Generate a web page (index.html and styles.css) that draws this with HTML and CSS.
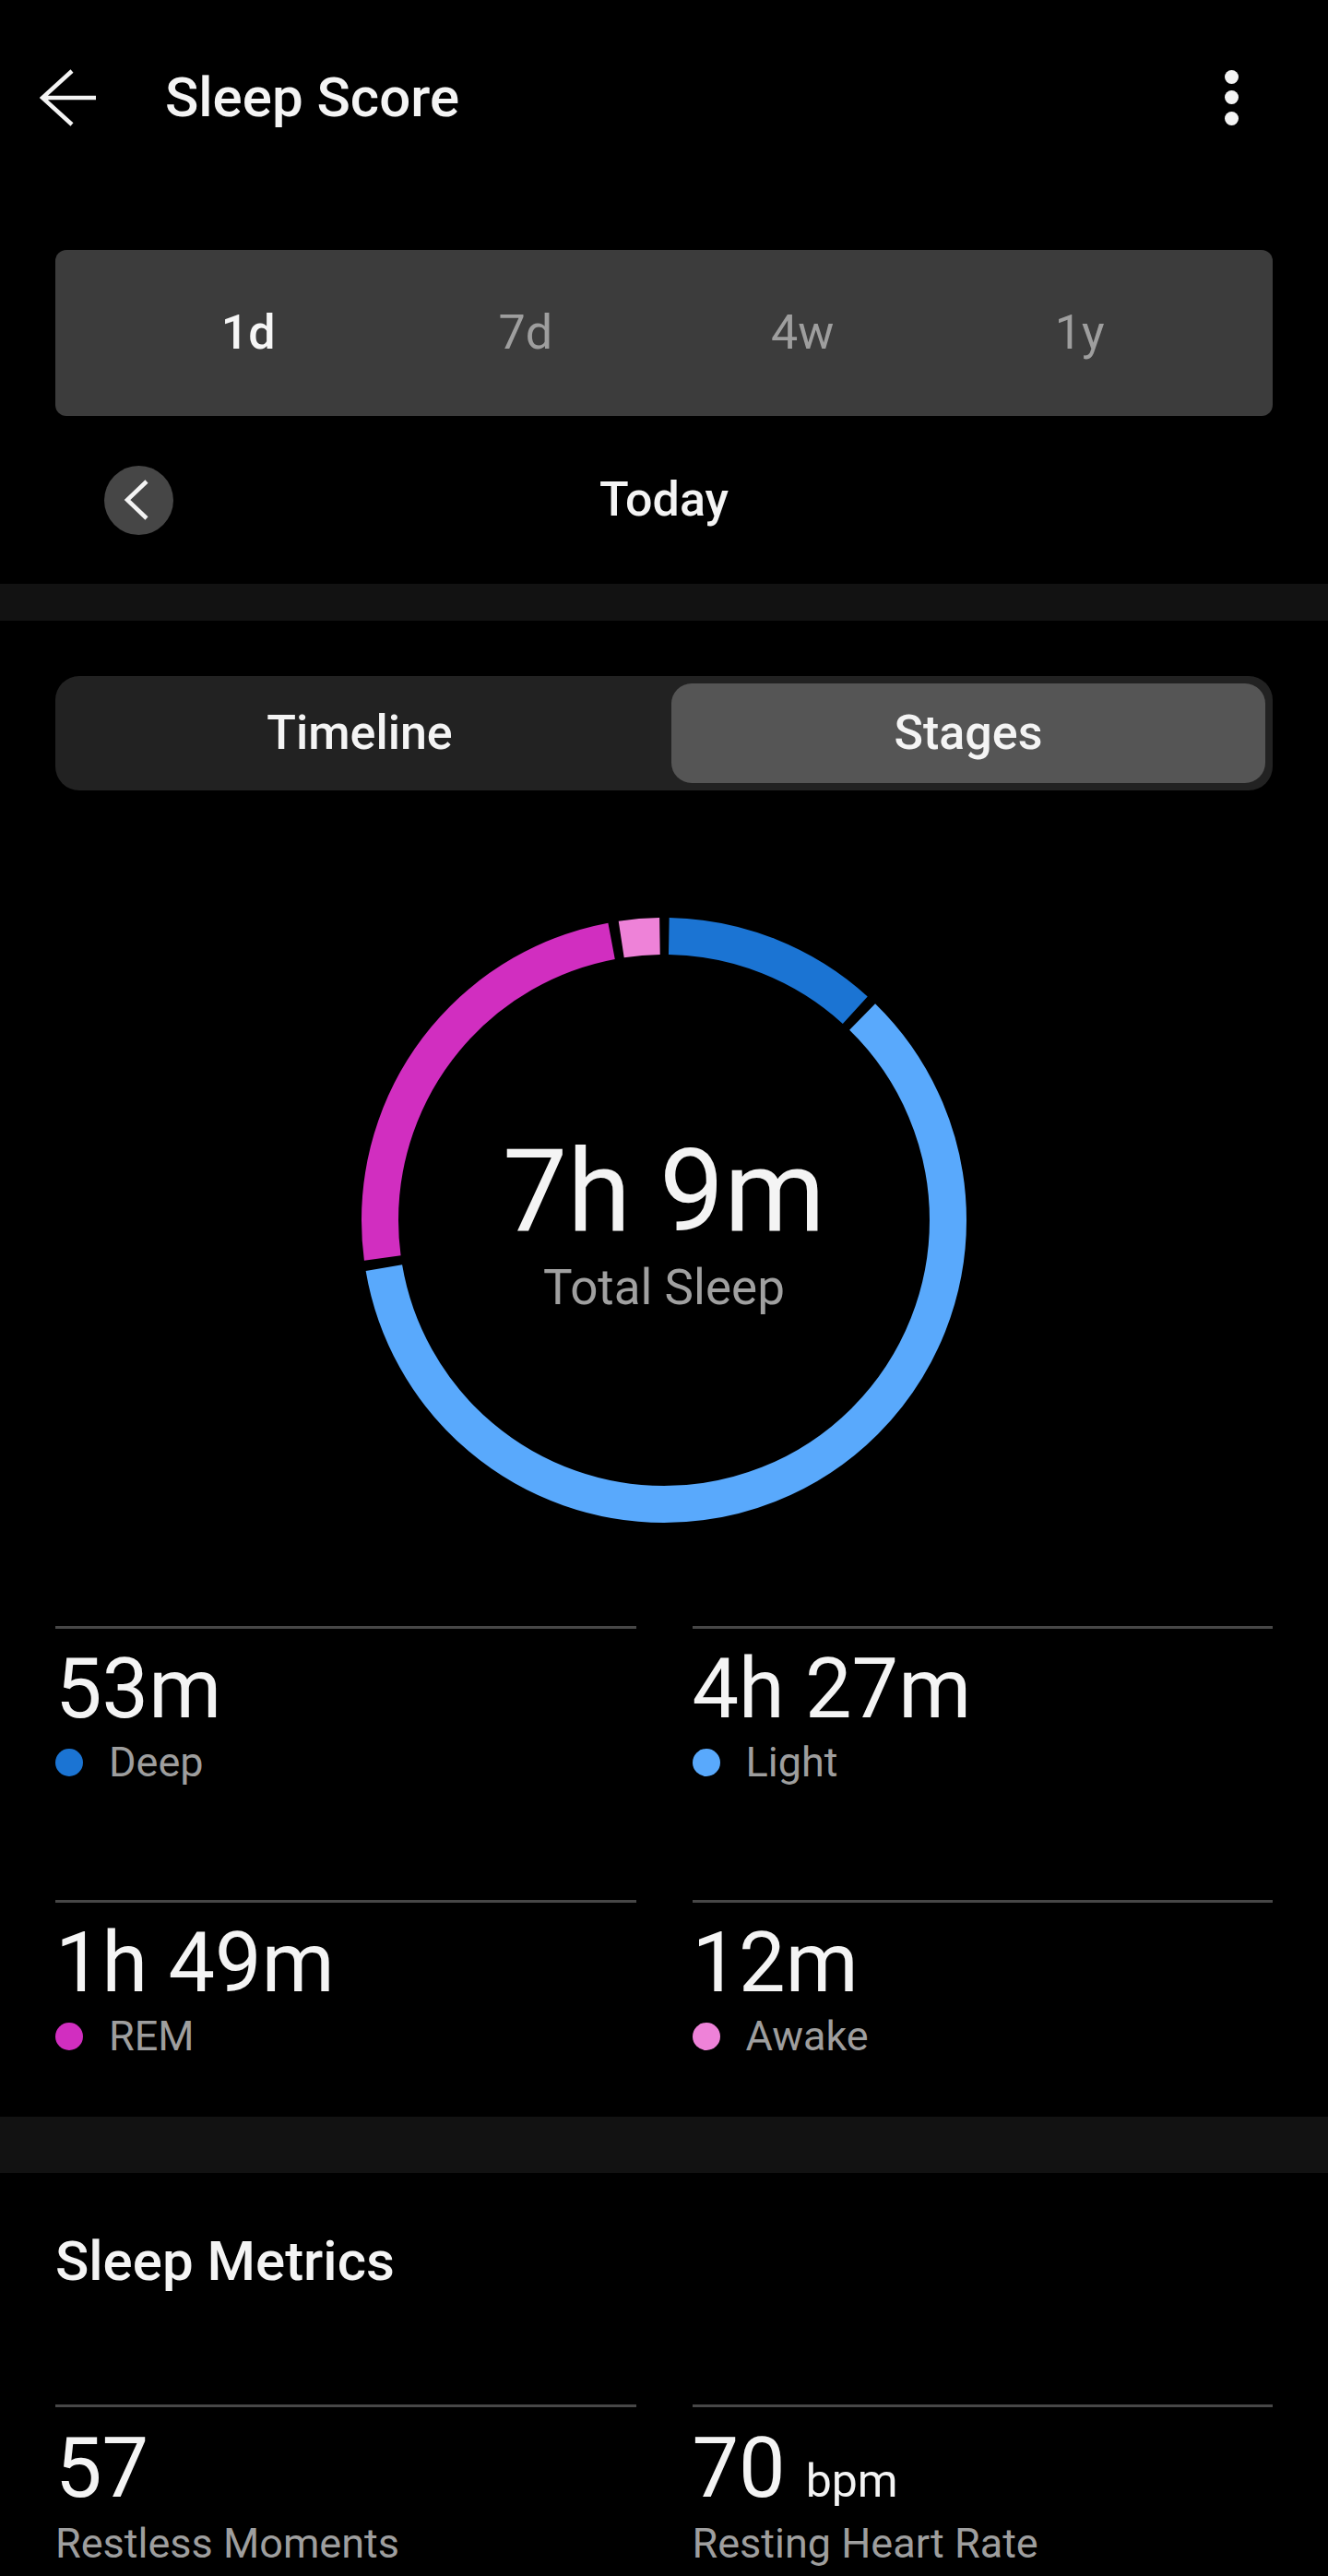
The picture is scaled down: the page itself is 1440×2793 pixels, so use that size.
FILE: index.html
```html
<!doctype html>
<html lang="en">

<head>
    <meta charset="utf-8">
    <meta name="viewport" content="width=device-width, initial-scale=1">
    <title>Sleep Score</title>
    <link rel="stylesheet" href="styles.css">
</head>

<body>
<!-- fejléc -->
<header class="topbar">
    <button class="back-btn" aria-label="Back">
        <svg width="64" height="62" viewBox="0 0 64 62">
            <path d="M61 31H4M35 2L3 31L35 60" fill="none" stroke="#f4f4f4" stroke-width="4.5"/>
        </svg>
    </button>
    <h1 class="title">Sleep Score</h1>
    <button class="more-btn" aria-label="More">
        <span class="dot"></span>
        <span class="dot"></span>
        <span class="dot"></span>
    </button>
</header>

<section class="range">
    <div class="range-tabs">
        <span class="range-tab active">1d</span>
        <span class="range-tab">7d</span>
        <span class="range-tab">4w</span>
        <span class="range-tab">1y</span>
    </div>
    <div class="date-row">
        <button class="prev-btn" aria-label="Previous day">
            <svg width="30" height="46" viewBox="0 0 30 46">
                <path d="M25 3L4 23L25 43" fill="none" stroke="#f4f4f4" stroke-width="4.5"/>
            </svg>
        </button>
        <span class="date-label">Today</span>
        <span></span>
    </div>
</section>

<div class="band"></div>

<section class="stages">
    <div class="view-toggle">
        <span class="view-tab">Timeline</span>
        <span class="view-tab active">Stages</span>
    </div>

    <!-- kördiagram: 441 perc összesen, 2 fokos rések -->
    <div class="donut">
        <svg class="donut-chart" width="660" height="660" viewBox="0 0 660 660">
            <g transform="rotate(-90 330 330)" fill="none" stroke-width="40">
                <circle cx="330" cy="330" r="308" stroke="#1b74d3" stroke-dasharray="221.9 1935.2" stroke-dashoffset="-5.4"/>
                <circle cx="330" cy="330" r="308" stroke="#59a9fc" stroke-dasharray="1160.9 1935.2" stroke-dashoffset="-238"/>
                <circle cx="330" cy="330" r="308" stroke="#d12ec0" stroke-dasharray="467.6 1935.2" stroke-dashoffset="-1409.6"/>
                <circle cx="330" cy="330" r="308" stroke="#ee82d8" stroke-dasharray="41.9 1935.2" stroke-dashoffset="-1887.9"/>
            </g>
        </svg>
        <div class="donut-center">
            <div class="total-value">7h 9m</div>
            <div class="total-label">Total Sleep</div>
        </div>
    </div>

    <div class="stat-grid">
        <div class="stat">
            <div class="stat-value">53m</div>
            <div class="stat-label"><span class="swatch deep"></span>Deep</div>
        </div>
        <div class="stat">
            <div class="stat-value">4h 27m</div>
            <div class="stat-label"><span class="swatch light"></span>Light</div>
        </div>
        <div class="stat">
            <div class="stat-value">1h 49m</div>
            <div class="stat-label"><span class="swatch rem"></span>REM</div>
        </div>
        <div class="stat">
            <div class="stat-value">12m</div>
            <div class="stat-label"><span class="swatch awake"></span>Awake</div>
        </div>
    </div>
</section>

<div class="band band-wide"></div>

<section class="metrics">
    <h2 class="section-title">Sleep Metrics</h2>
    <div class="stat-grid metric-grid">
        <div class="stat">
            <div class="stat-value">57</div>
            <div class="metric-label">Restless Moments</div>
        </div>
        <div class="stat">
            <div class="stat-value">70<span class="unit">bpm</span></div>
            <div class="metric-label">Resting Heart Rate</div>
        </div>
    </div>
</section>
</body>

</html>
```

FILE: styles.css
```css
body {
    margin: 0;
    background-color: #000;
    color: #f4f4f4;
    font-family: Roboto, "Liberation Sans", sans-serif;
}

button {
    background: none;
    border: none;
    padding: 0;
    cursor: pointer;
}

/* fejléc */
.topbar {
    height: 212px;
    display: flex;
    align-items: center;
    padding: 0 97px 0 43px;
}

.back-btn svg {
    display: block;
}

.title {
    margin: 0 0 0 72px;
    font-size: 60px;
    font-weight: 500;
    line-height: 1;
}

.more-btn {
    margin-left: auto;
    display: flex;
    flex-direction: column;
    gap: 7.5px;
    margin-top: -1px;
}

.more-btn .dot {
    width: 15px;
    height: 15px;
    border-radius: 50%;
    background-color: #f4f4f4;
}

/* időszak választó */
.range {
    padding: 59px 60px 0;
}

.range-tabs {
    height: 180px;
    background-color: #3c3c3c;
    border-radius: 12px;
    display: grid;
    grid-template-columns: repeat(4, 1fr);
    align-items: center;
    padding: 0 59px;
}

.range-tab {
    text-align: center;
    font-size: 52px;
    line-height: 1;
    color: #9e9e9e;
}

.range-tab.active {
    color: #f6f6f6;
    font-weight: 500;
}

.date-row {
    height: 182px;
    display: grid;
    grid-template-columns: 1fr auto 1fr;
    align-items: center;
}

.prev-btn {
    width: 75px;
    height: 75px;
    margin-left: 53px;
    border-radius: 50%;
    background-color: #464646;
    display: flex;
    align-items: center;
    justify-content: center;
}

.prev-btn svg {
    display: block;
    margin-left: -4px;
}

.date-label {
    font-size: 52px;
    font-weight: 500;
    line-height: 1;
}

.band {
    height: 40px;
    background-color: #121212;
}

.band-wide {
    height: 61px;
    margin-top: 66px;
}

/* fázisok */
.stages {
    padding: 60px 60px 0;
}

.view-toggle {
    height: 124px;
    box-sizing: border-box;
    background-color: #222;
    border-radius: 26px;
    padding: 8px;
    display: grid;
    grid-template-columns: 1fr 1fr;
    gap: 16px;
}

.view-tab {
    display: flex;
    align-items: center;
    justify-content: center;
    border-radius: 22px;
    font-size: 52px;
    font-weight: 500;
    line-height: 1;
}

.view-tab.active {
    background-color: #555;
}

.donut {
    margin: 136px auto 0;
    width: 660px;
    height: 660px;
    display: grid;
    place-items: center;
}

.donut-chart,
.donut-center {
    grid-area: 1 / 1;
}

.donut-chart {
    display: block;
}

.donut-center {
    text-align: center;
    margin-top: 6px;
}

.total-value {
    font-size: 125px;
    line-height: 1;
}

.total-label {
    margin-top: 16px;
    font-size: 53px;
    line-height: 1;
    color: #a0a0a0;
}

.stat-grid {
    margin-top: 110px;
    display: grid;
    grid-template-columns: 1fr 1fr;
    column-gap: 61px;
    row-gap: 128px;
}

.stat {
    border-top: 3px solid #474747;
    padding-top: 21px;
}

.stat-value {
    font-size: 90px;
    line-height: 1;
}

.stat-label {
    margin-top: 13px;
    display: flex;
    align-items: center;
    gap: 28px;
    font-size: 45px;
    line-height: 42px;
    color: #9e9e9e;
}

.swatch {
    width: 30px;
    height: 30px;
    border-radius: 50%;
}

.swatch.deep { background-color: #1b74d3; }
.swatch.light { background-color: #59a9fc; }
.swatch.rem { background-color: #d12ec0; }
.swatch.awake { background-color: #ee82d8; }

/* metrikák */
.metrics {
    padding: 67px 60px 14px;
}

.section-title {
    margin: 0;
    font-size: 60px;
    font-weight: 500;
    line-height: 58px;
}

.metric-grid {
    margin-top: 126px;
}

.metric-grid .stat {
    padding-top: 22px;
}

.unit {
    margin-left: 22px;
    font-size: 50px;
}

.metric-label {
    margin-top: 15px;
    font-size: 45px;
    line-height: 42px;
    color: #9e9e9e;
}
```
